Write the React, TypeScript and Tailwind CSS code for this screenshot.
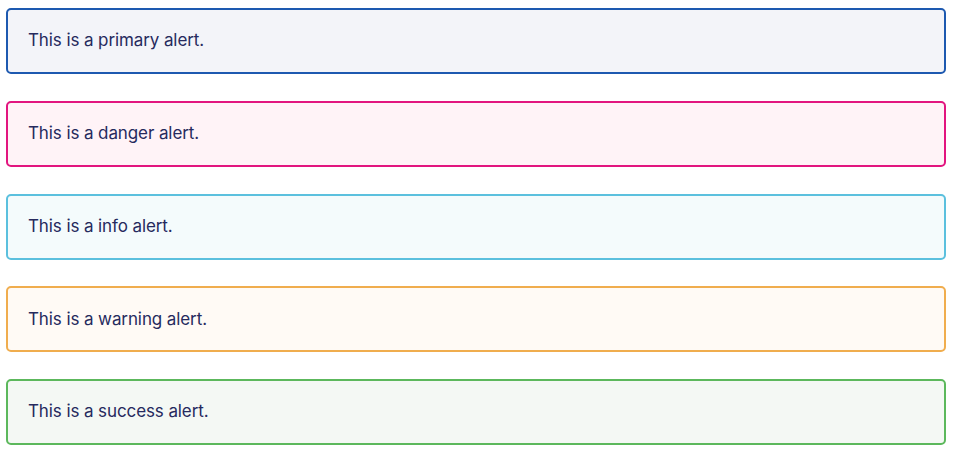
const alerts = [
  { text: "This is a primary alert.", cls: "border-[#1d59b0] bg-[#f3f4f9]" },
  { text: "This is a danger alert.", cls: "border-[#e2157f] bg-[#fff3f7]" },
  { text: "This is a info alert.", cls: "border-[#5bc0de] bg-[#f4fbfc]" },
  { text: "This is a warning alert.", cls: "border-[#f0ad4e] bg-[#fffaf5]" },
  { text: "This is a success alert.", cls: "border-[#5cb85c] bg-[#f4f8f4]" },
];

export default function App() {
  return (
    <div className="min-h-screen bg-white pt-[8px] pl-[6px] pr-[11px]">
      <div className="flex flex-col gap-[26.75px]">
        {alerts.map((a) => (
          <div
            key={a.text}
            className={`h-[66px] flex items-center rounded-[5px] border-2 px-[20px] text-[17px] tracking-[-0.1px] text-[#262a5e] font-['Inter',sans-serif] ${a.cls}`}
          >
            {a.text}
          </div>
        ))}
      </div>
    </div>
  );
}
